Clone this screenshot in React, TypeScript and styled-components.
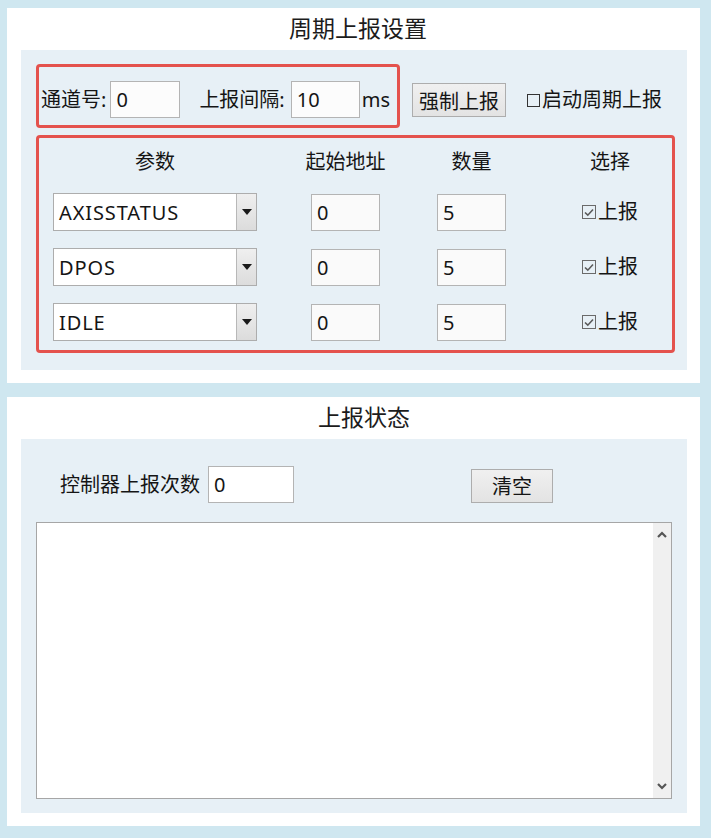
import React from "react";
import styled, { createGlobalStyle } from "styled-components";

const GlobalStyle = createGlobalStyle`
  html, body {
    margin: 0;
    padding: 0;
    background: #cfe7f0;
  }
  body {
    font-family: "Noto Sans", "Noto Sans CJK SC", sans-serif;
    color: #151515;
  }
`;

const Frame = styled.div`
  width: 711px;
  height: 838px;
  box-sizing: border-box;
  padding: 8px 11px 12px 7px;
  background: #cfe7f0;
  display: flex;
  flex-direction: column;
  gap: 14px;
`;

const Panel = styled.section<{ $height?: number }>`
  background: #fff;
  display: flex;
  flex-direction: column;
  box-sizing: border-box;
  padding: 0 13px 13px 14px;
  ${(p) => (p.$height ? `height: ${p.$height}px;` : "flex: 1;")}
`;

const PanelTitle = styled.div<{ $shift: number }>`
  height: 42px;
  display: flex;
  align-items: center;
  justify-content: center;
  padding: 0 0 4px ${(p) => p.$shift}px;
  box-sizing: border-box;
  font-size: 23px;
  color: #1c1c1c;
`;

const PanelBody = styled.div<{ $pad: string }>`
  flex: 1;
  background: #e7f0f6;
  padding: ${(p) => p.$pad};
  display: flex;
  flex-direction: column;
  box-sizing: border-box;
`;

const TopRow = styled.div`
  display: flex;
  align-items: center;
`;

const RedBox = styled.div`
  border: 3px solid #e4524d;
  border-radius: 4px;
  box-sizing: border-box;
`;

const ChannelBox = styled(RedBox)`
  width: 364px;
  height: 64px;
  padding: 7px 0 0 2px;
  display: flex;
  align-items: center;
`;

const Label = styled.span<{ $ml?: number }>`
  font-size: 20px;
  line-height: 28px;
  white-space: nowrap;
  margin-left: ${(p) => p.$ml ?? 0}px;
`;

const Field = styled.div<{ $w: number; $h?: number; $ml?: number; $bg?: string }>`
  width: ${(p) => p.$w}px;
  height: ${(p) => p.$h ?? 37}px;
  margin-left: ${(p) => p.$ml ?? 0}px;
  box-sizing: border-box;
  border: 1px solid #b4b4b4;
  background: ${(p) => p.$bg ?? "#fcfcfc"};
  font-size: 20px;
  padding-left: 5px;
  display: flex;
  align-items: center;
`;

const Button = styled.div<{ $w: number; $ml: number; $mt?: number }>`
  width: ${(p) => p.$w}px;
  height: 34px;
  margin-left: ${(p) => p.$ml}px;
  margin-top: ${(p) => p.$mt ?? 0}px;
  box-sizing: border-box;
  border: 1px solid #adadad;
  background: linear-gradient(#f0f0f0, #e3e3e3);
  font-size: 20px;
  display: flex;
  align-items: center;
  justify-content: center;
`;

const CheckLabel = styled.div<{ $ml?: number; $mt?: number }>`
  display: flex;
  align-items: center;
  font-size: 20px;
  line-height: 28px;
  margin-left: ${(p) => p.$ml ?? 0}px;
  margin-top: ${(p) => p.$mt ?? 0}px;
  white-space: nowrap;
`;

const Box = styled.span<{ $checked?: boolean }>`
  width: ${(p) => (p.$checked ? 14 : 13)}px;
  height: ${(p) => (p.$checked ? 14 : 13)}px;
  box-sizing: border-box;
  border: 1px solid ${(p) => (p.$checked ? "#6a6a6a" : "#333")};
  margin-right: 2px;
  display: flex;
  align-items: center;
  justify-content: center;
`;

const ParamBox = styled(RedBox)`
  width: 639px;
  height: 218px;
  margin-top: 7px;
  padding: 10px 0 9px 14px;
  display: grid;
  grid-template-columns: 204px 177px 75px 1fr;
  grid-template-rows: 28px repeat(3, 38px);
  row-gap: 17px;
  align-items: center;
`;

const Head = styled.div`
  justify-self: center;
  font-size: 20px;
  line-height: 28px;
`;

const ChoiceCell = styled.div`
  justify-self: stretch;
  display: flex;
  justify-content: center;
  padding-left: 39px;
`;

const Select = styled.div`
  width: 204px;
  height: 38px;
  box-sizing: border-box;
  border: 1px solid #adadad;
  background: #fff;
  display: flex;
`;

const SelectText = styled.div`
  flex: 1;
  font-size: 20px;
  letter-spacing: 0.9px;
  padding-left: 5px;
  display: flex;
  align-items: center;
`;

const DropButton = styled.div`
  width: 19px;
  border-left: 1px solid #b8b8b8;
  background: linear-gradient(#efefef, #dcdcdc);
  display: flex;
  align-items: center;
  justify-content: center;
`;

const CenterCell = styled.div`
  justify-self: center;
`;

const CountRow = styled.div`
  display: flex;
  align-items: center;
  margin-left: 24px;
`;

const LogArea = styled.div`
  flex: 1;
  margin-top: 19px;
  border: 1px solid #a6a6a6;
  background: #fff;
  display: flex;
  justify-content: flex-end;
`;

const ScrollBar = styled.div`
  width: 18px;
  background: #f0f0f0;
  display: flex;
  flex-direction: column;
  justify-content: space-between;
  align-items: center;
  padding: 8px 0 8px;
`;

const Check = () => (
  <svg width="10" height="9" viewBox="0 0 10 9">
    <path d="M1 4.5 L3.8 7.2 L9 1.5" fill="none" stroke="#5a5a5a" strokeWidth="1.6" />
  </svg>
);

const Caret = () => (
  <svg width="10" height="6" viewBox="0 0 10 6">
    <polygon points="0,0 10,0 5,6" fill="#1a1a1a" />
  </svg>
);

const Chevron = ({ up }: { up?: boolean }) => (
  <svg width="10" height="7" viewBox="0 0 10 7">
    <path
      d={up ? "M1 6 L5 2 L9 6" : "M1 1 L5 5 L9 1"}
      fill="none"
      stroke="#555"
      strokeWidth="2.2"
    />
  </svg>
);

const params = ["AXISSTATUS", "DPOS", "IDLE"];

export default function App() {
  return (
    <>
      <GlobalStyle />
      <Frame>
        <Panel $height={375}>
          <PanelTitle $shift={8}>周期上报设置</PanelTitle>
          <PanelBody $pad="14px 12px 17px 15px">
            <TopRow>
              <ChannelBox>
                <Label>通道号:</Label>
                <Field $w={70} $ml={4}>0</Field>
                <Label $ml={19}>上报间隔:</Label>
                <Field $w={69} $ml={6}>10</Field>
                <Label $ml={2}>ms</Label>
              </ChannelBox>
              <Button $w={94} $ml={12} $mt={8}>强制上报</Button>
              <CheckLabel $ml={21} $mt={8}>
                <Box />
                启动周期上报
              </CheckLabel>
            </TopRow>
            <ParamBox>
              <Head>参数</Head>
              <Head>起始地址</Head>
              <Head>数量</Head>
              <ChoiceCell>
                <Head>选择</Head>
              </ChoiceCell>
              {params.map((name) => (
                <React.Fragment key={name}>
                  <Select>
                    <SelectText>{name}</SelectText>
                    <DropButton>
                      <Caret />
                    </DropButton>
                  </Select>
                  <CenterCell>
                    <Field $w={69} $bg="#fafafa">0</Field>
                  </CenterCell>
                  <CenterCell>
                    <Field $w={69} $bg="#fafafa">5</Field>
                  </CenterCell>
                  <ChoiceCell>
                    <CheckLabel>
                      <Box $checked>
                        <Check />
                      </Box>
                      上报
                    </CheckLabel>
                  </ChoiceCell>
                </React.Fragment>
              ))}
            </ParamBox>
          </PanelBody>
        </Panel>
        <Panel>
          <PanelTitle $shift={20}>上报状态</PanelTitle>
          <PanelBody $pad="27px 15px 14px 15px">
            <CountRow>
              <Label>控制器上报次数</Label>
              <Field $w={86} $ml={8} $bg="#fff">0</Field>
              <Button $w={82} $ml={177} $mt={2}>清空</Button>
            </CountRow>
            <LogArea>
              <ScrollBar>
                <Chevron up />
                <Chevron />
              </ScrollBar>
            </LogArea>
          </PanelBody>
        </Panel>
      </Frame>
    </>
  );
}
